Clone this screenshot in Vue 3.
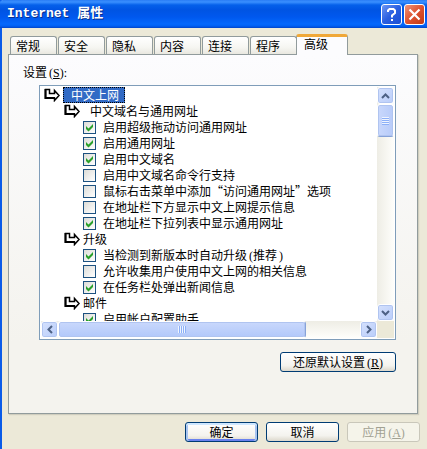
<template>
  <div class="dialog">
    <header class="titlebar">
      <h1 class="title">Internet 属性</h1>
      <button class="caption help" type="button" aria-label="帮助">
        <svg width="21" height="21" viewBox="0 0 21 21">
          <path d="M7 8V6.5L8.500 5H12.500L14 6.500V9L11 11.500V13.500" fill="none" stroke="#fff" stroke-width="2" />
          <rect x="10" y="15" width="2" height="2" fill="#fff" />
        </svg>
      </button>
      <button class="caption close" type="button" aria-label="关闭">
        <svg width="21" height="21" viewBox="0 0 21 21">
          <path d="M5.500 5.500L15.500 15.500M15.500 5.500L5.500 15.500" fill="none" stroke="#fff" stroke-width="2.200" />
        </svg>
      </button>
    </header>

    <main class="body">
      <nav class="tabs" role="tablist">
        <button
          v-for="tab in tabs"
          :key="tab"
          type="button"
          role="tab"
          class="tab"
          :class="{ active: tab === activeTab }"
          :aria-selected="tab === activeTab"
          @click="activeTab = tab"
        >{{ tab }}</button>
      </nav>

      <section class="panel" role="tabpanel">
        <div id="settings-label" class="settings-label">设置<span class="half">(<u>S</u>):</span></div>

        <div class="listbox" role="group" aria-labelledby="settings-label">
          <ul class="tree">
            <li v-for="(row, i) in rows" :key="i" class="row" :class="'level-' + row.level">
              <label v-if="row.level === 2" class="option">
                <span class="check">
                  <input v-model="row.checked" type="checkbox" />
                  <svg class="tick" width="13" height="13" viewBox="0 0 13 13">
                    <path d="M3 5V8L5.500 10.500L10 6V3L5.500 7.500Z" fill="#2aa02a" />
                  </svg>
                </span>
                <span>{{ row.text }}<span v-if="row.note" class="half">(</span>{{ row.note }}<span v-if="row.note" class="half">)</span></span>
              </label>
              <template v-else>
                <svg class="arrow" width="16" height="14" viewBox="0 0 16 14">
                  <path d="M1.500 1.500H5.500V5.500H10.500V2.500L15 7.500L10.500 12.500V10H1.500Z" fill="#fff" stroke="#000" stroke-width="1.500" />
                  <path d="M1.500 1V10H11" fill="none" stroke="#000" stroke-width="2" />
                </svg>
                <span class="group" :class="{ selected: row.selected, spaced: row.spaced }">{{ row.text }}</span>
              </template>
            </li>
          </ul>

          <div class="vbar">
            <button class="arrow-btn" type="button" aria-label="向上">
              <svg width="9" height="6" viewBox="0 0 9 6"><path d="M1 5L4.500 1.500L8 5" /></svg>
            </button>
            <div class="track">
              <div class="thumb"><i></i><i></i><i></i><i></i></div>
            </div>
            <button class="arrow-btn" type="button" aria-label="向下">
              <svg width="9" height="6" viewBox="0 0 9 6"><path d="M1 1L4.500 4.500L8 1" /></svg>
            </button>
          </div>

          <div class="hbar">
            <button class="arrow-btn" type="button" aria-label="向左">
              <svg width="6" height="9" viewBox="0 0 6 9"><path d="M5 1L1.500 4.500L5 8" /></svg>
            </button>
            <div class="track">
              <div class="thumb"><i></i><i></i><i></i><i></i></div>
            </div>
            <button class="arrow-btn" type="button" aria-label="向右">
              <svg width="6" height="9" viewBox="0 0 6 9"><path d="M1 1L4.500 4.500L1 8" /></svg>
            </button>
          </div>

          <div class="corner"></div>
        </div>

        <div class="restore">
          <button class="btn wide" type="button">还原默认设置<span class="half">(<u>R</u>)</span></button>
        </div>
      </section>

      <footer class="actions">
        <button class="btn default" type="button">确定</button>
        <button class="btn" type="button">取消</button>
        <button class="btn" type="button" disabled>应用<span class="half">(<u>A</u>)</span></button>
      </footer>
    </main>
  </div>
</template>

<script setup>
import { ref } from 'vue'

const tabs = ['常规', '安全', '隐私', '内容', '连接', '程序', '高级']
const activeTab = ref('高级')

const rows = ref([
  { level: 0, text: '中文上网', selected: true },
  { level: 1, text: '中文域名与通用网址', spaced: true },
  { level: 2, text: '启用超级拖动访问通用网址', checked: true },
  { level: 2, text: '启用通用网址', checked: true },
  { level: 2, text: '启用中文域名', checked: true },
  { level: 2, text: '启用中文域名命令行支持', checked: false },
  { level: 2, text: '鼠标右击菜单中添加“访问通用网址”选项', checked: false },
  { level: 2, text: '在地址栏下方显示中文上网提示信息', checked: false },
  { level: 2, text: '在地址栏下拉列表中显示通用网址', checked: true },
  { level: 1, text: '升级' },
  { level: 2, text: '当检测到新版本时自动升级', note: '推荐', checked: true },
  { level: 2, text: '允许收集用户使用中文上网的相关信息', checked: false },
  { level: 2, text: '在任务栏处弹出新闻信息', checked: true },
  { level: 1, text: '邮件' },
  { level: 2, text: '启用帐户配置助手', checked: true }
])
</script>

<style>
body {
  margin: 0;
  background: #ece9d8;
}
</style>

<style scoped>
.dialog {
  border-left: 2px solid #0a5be8;
  border-bottom: 1px solid #0a4bd0;
  background: #ece9d8;
  font: 12px/16px "Noto Sans CJK SC", "Noto Sans", sans-serif;
  color: #000;
}
button {
  margin: 0;
  padding: 0;
  border: 0;
  font: inherit;
  color: inherit;
}
.half {
  padding-left: 2px;
  font-family: "Liberation Serif", serif;
}
.titlebar {
  display: flex;
  align-items: center;
  gap: 2px;
  height: 28px;
  box-sizing: border-box;
  margin-left: -2px;
  padding: 0 2px 0 7px;
  border-top-left-radius: 3px;
  background: linear-gradient(#2a7df5 0, #3a90ff 2px, #0560ea 5px, #0054e3 10px, #0058ee 17px, #0468fc 24px, #0060f4 26px, #0144c8 28px);
}
.title {
  flex: 1;
  margin: 0;
  font: bold 13px/20px "Liberation Mono", "Noto Sans CJK SC", monospace;
  color: #fff;
  text-shadow: 1px 1px 0 #0a2f8c;
}
.caption {
  width: 21px;
  height: 21px;
  box-sizing: border-box;
  border: 1px solid #fff;
  border-radius: 3px;
}
.caption svg {
  display: block;
  margin: -1px;
}
.help {
  background: linear-gradient(135deg, #6d97f4, #2a5fe0 50%, #1a4fd4);
}
.close {
  background: linear-gradient(135deg, #f0957a, #dd5230 50%, #c03a14);
}

.body {
  padding: 6px 7px 7px 6px;
}
.tabs {
  display: flex;
  align-items: flex-end;
  padding-left: 2px;
  position: relative;
}
.tab {
  width: 47px;
  height: 18px;
  box-sizing: border-box;
  margin-right: 1px;
  padding-left: 5px;
  border: 1px solid #919b9c;
  border-bottom: 0;
  border-radius: 3px 3px 0 0;
  background: linear-gradient(#fff, #f6f6f2 60%, #e9e8e0);
  text-align: left;
  line-height: 16px;
}
.tab.active {
  width: 52px;
  height: 21px;
  margin: 0 0 -1px -2px;
  padding: 0 0 4px 7px;
  border-top: 3px solid #f0a838;
  background: #fcfcfe;
  line-height: 14px;
}
.panel {
  margin-right: 2px;
  padding: 9px 21px 41px 30px;
  border: 1px solid #919b9c;
  box-shadow: 1px 1px 1px #d0cebf;
  background: linear-gradient(#fcfcfe, #f4f3ee 80%);
}
.settings-label {
  margin-left: -16px;
  padding-bottom: 4px;
}

.listbox {
  display: grid;
  grid-template-columns: 1fr 17px;
  grid-template-rows: 234px 17px;
  padding: 1px;
  border: 1px solid #7f9db9;
  background: #fff;
}
.tree {
  margin: 0;
  padding: 0 0 0 3px;
  list-style: none;
  overflow: hidden;
  white-space: nowrap;
}
.row {
  display: flex;
  align-items: center;
  height: 16px;
}
.level-1 {
  padding-left: 20px;
}
.level-2 {
  padding-left: 39px;
}
.arrow {
  flex: none;
  margin-right: 3px;
}
.group.selected {
  padding: 0 6px 0 8px;
  background: #316ac5;
  outline: 1px dotted #000;
  outline-offset: -1px;
  color: #fff;
}
.group.spaced {
  padding-left: 7px;
}
.option {
  display: flex;
  align-items: center;
  gap: 7px;
}
.check {
  position: relative;
  width: 13px;
  height: 13px;
}
.check input {
  appearance: none;
  display: block;
  width: 13px;
  height: 13px;
  box-sizing: border-box;
  margin: 0;
  border: 1px solid #1c5180;
  background: linear-gradient(135deg, #dcdcd7, #fff);
}
.tick {
  position: absolute;
  top: 0;
  left: 0;
  visibility: hidden;
  pointer-events: none;
}
.check input:checked + .tick {
  visibility: visible;
}

.vbar,
.hbar {
  display: flex;
}
.vbar {
  flex-direction: column;
  background: linear-gradient(90deg, #eeede5, #fefefb);
}
.hbar {
  background: linear-gradient(#eeede5, #fefefb);
}
.corner {
  background: #ece9d8;
}
.arrow-btn,
.thumb {
  display: flex;
  align-items: center;
  justify-content: center;
  box-sizing: border-box;
  border: 1px solid #fff;
  border-radius: 3px;
  background: linear-gradient(135deg, #d5e1fd, #b9cdfa);
  box-shadow: inset 0 0 0 1px #b0c4f0;
}
.arrow-btn {
  flex: none;
  width: 17px;
  height: 17px;
}
.arrow-btn path {
  fill: none;
  stroke: #4d6185;
  stroke-width: 2;
}
.track {
  flex: 1;
  display: flex;
}
.vbar .thumb {
  flex-direction: column;
  width: 17px;
  height: 33px;
  border-bottom-color: #86a2d8;
  background: linear-gradient(90deg, #c9d8fc, #b7cbf9);
}
.hbar .thumb {
  width: 82%;
  border-right-color: #86a2d8;
  background: linear-gradient(#c9d8fc, #b2c8fa);
}
.vbar i {
  width: 7px;
  height: 1px;
  background: #eef4fe;
  border-bottom: 1px solid #8cb0f8;
}
.hbar i {
  width: 1px;
  height: 7px;
  background: #eef4fe;
  border-right: 1px solid #8cb0f8;
}

.restore {
  display: flex;
  justify-content: flex-end;
  padding-top: 12px;
}
.btn {
  width: 73px;
  height: 20px;
  box-sizing: border-box;
  border: 1px solid #003c74;
  border-radius: 3px;
  background: linear-gradient(#fff, #f4f3ee 70%, #dcd8cc);
  line-height: 16px;
  text-align: center;
}
.btn.wide {
  width: 116px;
}
.btn.default {
  box-shadow: inset 0 2px 0 #cee7ff, inset 2px 0 0 #a8c4f0, inset -2px 0 0 #a8c4f0, inset 0 -2px 0 #6982ee;
}
.btn:disabled {
  border-color: #c9c7ba;
  background: #f5f4ea;
  color: #a1a192;
}
.actions {
  display: flex;
  justify-content: flex-end;
  gap: 8px;
  padding-top: 8px;
}
</style>
